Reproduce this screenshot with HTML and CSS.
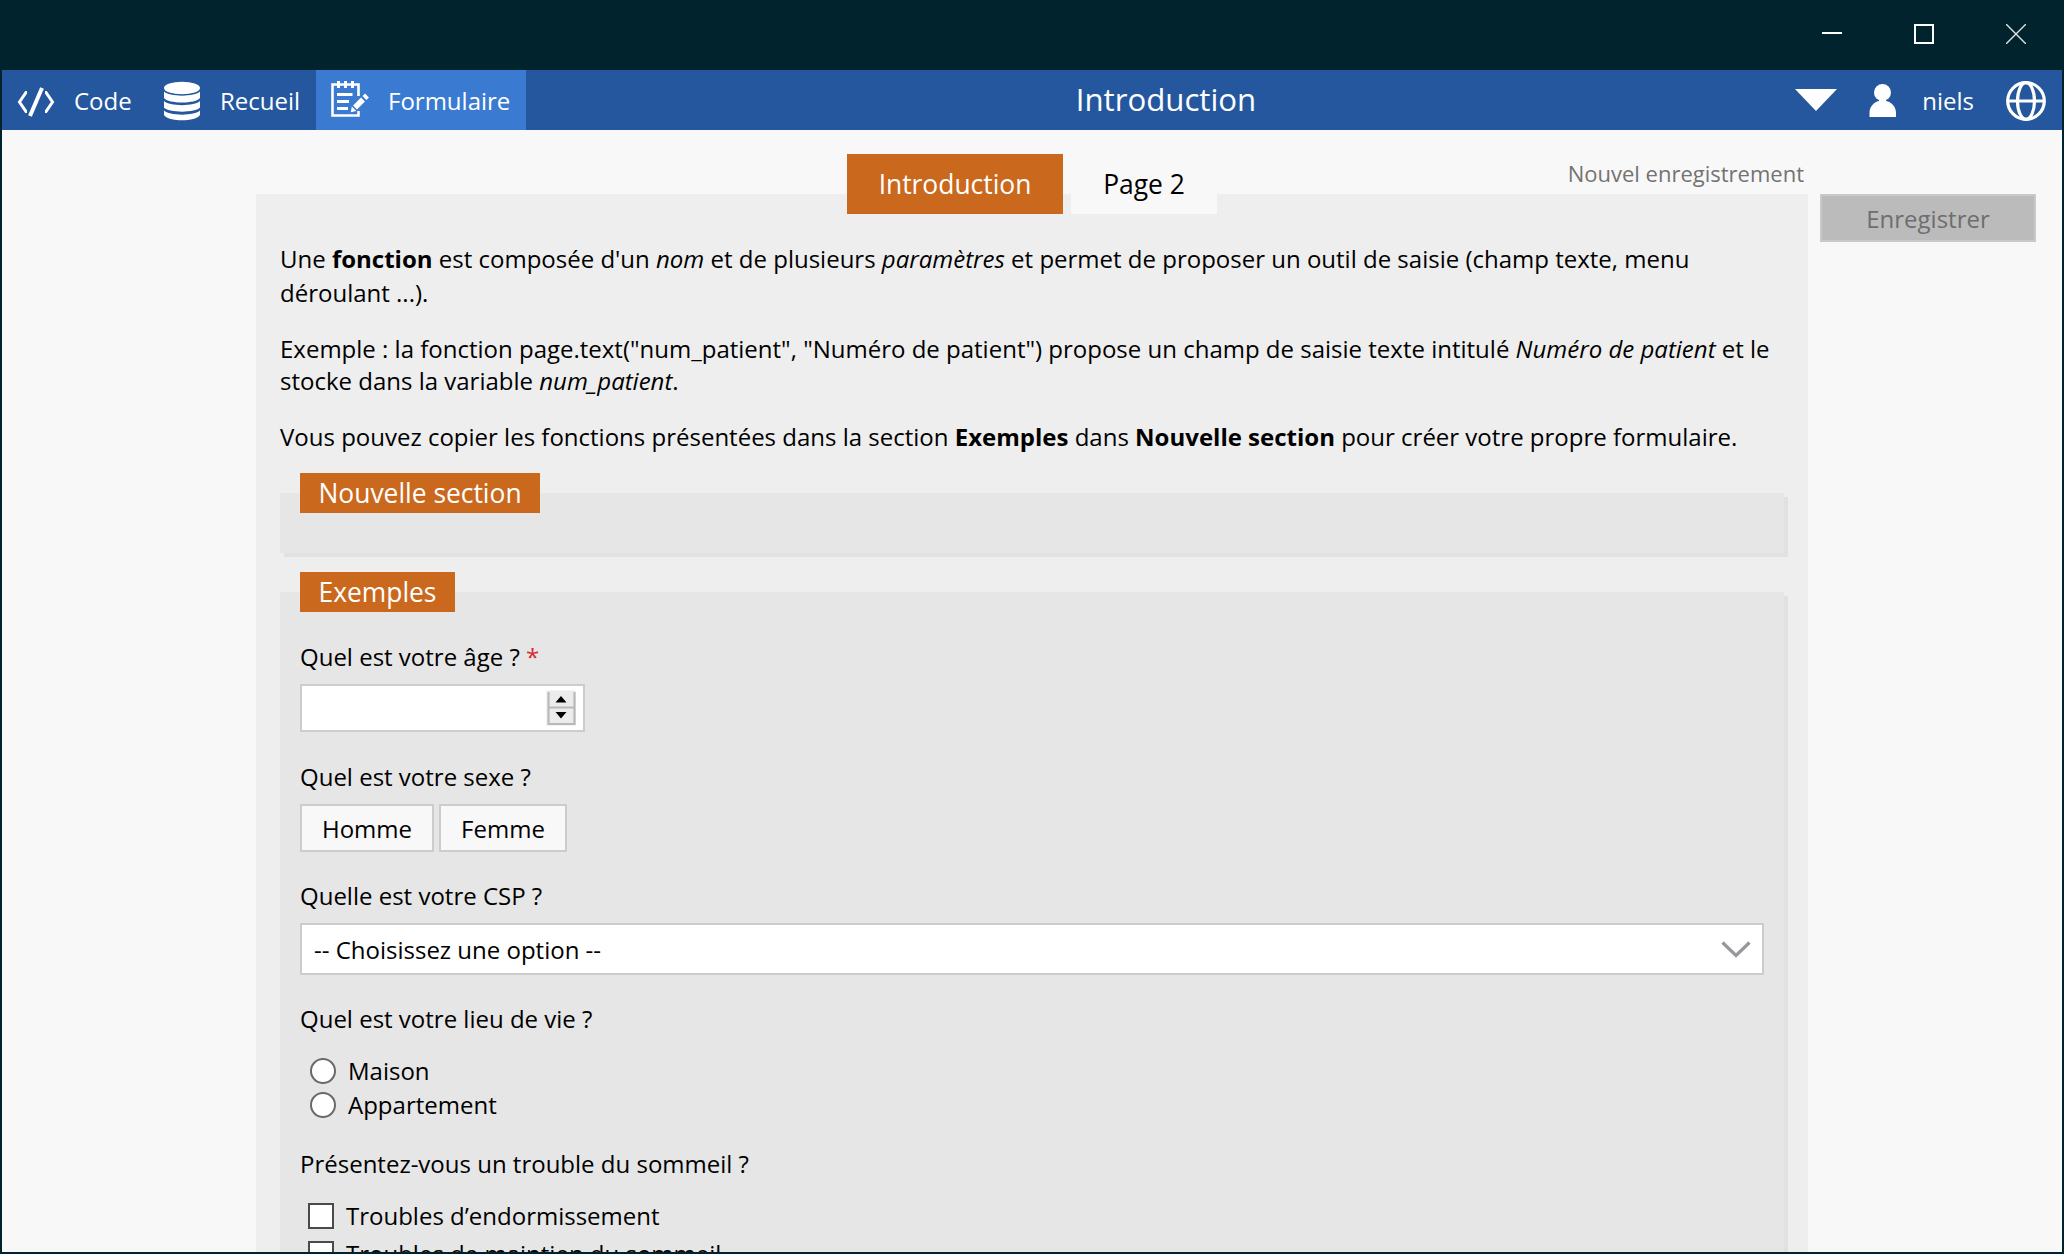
FILE: index.html
```html
<!DOCTYPE html>
<html lang="fr">
<head>
<meta charset="utf-8">
<title>Introduction</title>
<link rel="stylesheet" href="styles.css">
</head>
<body>
<div class="window">
  <header class="titlebar">
    <svg class="win-icon" viewBox="0 0 20 20"><path d="M0 9h20" stroke="#fff" stroke-width="2"/></svg>
    <svg class="win-icon" viewBox="0 0 20 20"><rect x="1" y="1" width="18" height="18" fill="none" stroke="#fff" stroke-width="2"/></svg>
    <svg class="win-icon" viewBox="0 0 20 20"><path d="M0 0L20 20M20 0L0 20" stroke="#e2e4e4" stroke-width="1.4"/></svg>
  </header>

  <nav class="menu">
    <a class="menu-item item-code">
      <svg width="38" height="30" viewBox="0 0 38 30" fill="none" stroke="#fff" stroke-width="3"><path d="M10 5.500h-1L2.500 15L9 24.500h1M28 5.500h1L35.500 15L29 24.500h-1"/><path d="M25 1L13 29" stroke-width="4"/></svg>
      <span>Code</span>
    </a>
    <a class="menu-item item-data">
      <svg width="36" height="40" viewBox="0 0 36 40" fill="#fff"><ellipse cx="18" cy="7" rx="18" ry="6.200"/><path d="M0 10.500C5 16 31 16 36 10.500V17C32 23 4 23 0 17z"/><path d="M0 20C5 25.500 31 25.500 36 20V26.500C32 32 4 32 0 26.500z"/><path d="M0 29.500C5 35 31 35 36 29.500V34C32 41 4 41 0 34z"/></svg>
      <span>Recueil</span>
    </a>
    <a class="menu-item item-form active">
      <svg width="40" height="38" viewBox="0 0 40 38" fill="none" stroke="#fff"><path d="M28.500 16V4.500H2.500V35.500H28.500V31" stroke-width="2.600"/><path d="M8.500 1V8M15.500 1V8M22.500 1V8" stroke-width="3"/><path d="M7 14.500H22.500M7 21.500H19M7 28.500H18" stroke-width="2.800"/><path d="M25 27.500L33 19.500" stroke-width="5.500"/><path d="M34.500 18L37 15.500" stroke-width="5.500"/><path d="M21.800 26.500l4.500 4.500l-5.500 1.200z" fill="#fff" stroke="none"/></svg>
      <span>Formulaire</span>
    </a>
    <span class="menu-title">Introduction</span>
    <svg class="caret" width="42" height="22" viewBox="0 0 42 22" fill="#fff"><path d="M0 0H42L21 22z"/></svg>
    <svg class="user" width="28" height="33" viewBox="0 0 28 33" fill="#fff"><circle cx="13.500" cy="8.500" r="8.500"/><path d="M10 14h7v3c6 1 10 6 10 12v4H.500v-4c0-6 4-11 9.500-12z"/></svg>
    <span class="user-name">niels</span>
    <svg class="globe" width="40" height="40" viewBox="0 0 40 40" fill="none" stroke="#fff" stroke-width="3.200"><circle cx="20" cy="20" r="18.300"/><ellipse cx="20" cy="20" rx="8.500" ry="18.300"/><path d="M2 20H38"/></svg>
  </nav>

  <main class="content">
    <div class="column">
      <div class="tabs">
        <a class="tab selected">Introduction</a>
        <a class="tab">Page 2</a>
        <span class="status">Nouvel enregistrement</span>
      </div>
      <div class="panel">
        <p>Une <b>fonction</b> est composée d'un <i>nom</i> et de plusieurs <i>paramètres</i> et permet de proposer un outil de saisie (champ texte, menu<br>déroulant ...).</p>
        <p class="tight">Exemple : la fonction page.text("num_patient", "Numéro de patient") propose un champ de saisie texte intitulé <i>Numéro de patient</i> et le<br>stocke dans la variable <i>num_patient</i>.</p>
        <p>Vous pouvez copier les fonctions présentées dans la section <b>Exemples</b> dans <b>Nouvelle section</b> pour créer votre propre formulaire.</p>

        <section class="group empty"><h2>Nouvelle section</h2></section>

        <section class="group">
          <h2>Exemples</h2>
          <div class="field age">
            <label>Quel est votre âge ? <span class="required">*</span></label>
            <div class="number">
              <svg width="30" height="36" viewBox="0 0 30 36"><rect width="30" height="36" fill="#f3f3f3"/><rect x="2" y="1" width="26" height="33" fill="#ececec"/><path d="M2.500 2V34H28.500V2M2.500 17.500H28.500" fill="none" stroke="#b9b9b9" stroke-width="2.200"/><path d="M9.500 12.500L15 6l5.500 6.500zM9.500 22h11L15 28.500z" fill="#000"/></svg>
            </div>
          </div>
          <div class="field sex">
            <label>Quel est votre sexe ?</label>
            <div class="choices"><button class="homme">Homme</button><button class="femme">Femme</button></div>
          </div>
          <div class="field csp">
            <label>Quelle est votre CSP ?</label>
            <div class="select"><span>-- Choisissez une option --</span>
              <svg width="30" height="18" viewBox="0 0 30 18"><path d="M1.500 1.500L15 14.500L28.500 1.500" fill="none" stroke="#99979b" stroke-width="3.200"/></svg>
            </div>
          </div>
          <div class="field home">
            <label>Quel est votre lieu de vie ?</label>
            <div class="option"><span class="radio"></span>Maison</div>
            <div class="option"><span class="radio"></span>Appartement</div>
          </div>
          <div class="field sleep">
            <label>Présentez-vous un trouble du sommeil ?</label>
            <div class="option check"><span class="box"></span>Troubles d’endormissement</div>
            <div class="option check"><span class="box"></span>Troubles de maintien du sommeil</div>
          </div>
        </section>
      </div>
    </div>
    <aside class="actions"><button class="save" disabled>Enregistrer</button></aside>
  </main>
</div>
</body>
</html>
```
FILE: styles.css
```css
* { box-sizing: border-box; }
body { margin: 0; background: #00232d; font: 24px/34px "Open Sans", sans-serif; color: #000; }
svg { display: block; flex: none; }
button { font: inherit; color: inherit; margin: 0; padding: 0; border-radius: 0; }
.window { display: flex; flex-direction: column; width: 2064px; height: 1254px; padding: 0 2px 2px; overflow: hidden; white-space: nowrap; }

.titlebar { display: flex; justify-content: flex-end; gap: 72px; flex: none; height: 70px; padding: 24px 36px 0 0; }
.win-icon { width: 20px; height: 20px; }

.menu { display: flex; align-items: center; flex: none; height: 60px; background: #24579e; color: #fff; line-height: 60px; }
.menu-item { display: flex; align-items: center; height: 60px; }
.menu-item span { padding-top: 1px; height: 60px; }
.item-code { width: 146px; padding: 4px 0 0 15px; gap: 19px; }
.item-code span { height: 64px; }
.item-data { width: 168px; padding-left: 16px; gap: 20px; }
.item-data svg { margin-top: 1px; }
.item-form { width: 210px; padding-left: 14px; gap: 18px; }
.item-form svg { margin-top: -2px; }
.active { background: #3a7ad1; }
.menu-title { height: 60px; width: 1180px; margin-left: 50px; text-align: center; font-size: 31.200px; line-height: 59px; }
.caret { margin: 0 32px 0 auto; }
.user { margin-right: 25px; }
.user-name { padding-top: 2px; margin-right: 32px; }
.globe { margin-right: 16px; margin-top: 2px; }

.content { display: flex; flex: 1; min-height: 0; padding: 24px 0 0 254px; background: #f8f8f8; overflow: hidden; }
.column { width: 1552px; flex: none; }
.tabs { position: relative; display: flex; justify-content: center; gap: 8px; height: 60px; margin-bottom: -20px; }
.tab { width: 146px; background: #f8f8f8; text-align: center; font-size: 26.400px; line-height: 61px; }
.tab.selected { width: 216px; background: #ca691e; color: #fff; }
.status { position: absolute; right: 4px; top: 2px; color: #737373; font-size: 22px; }
.panel { height: 1080px; padding: 48px 20px 0 24px; background: #eee; }
p { margin: 0 0 23px; }
p.tight { line-height: 32px; }

.group { width: 1504px; height: 900px; margin-top: 39px; padding: 0 20px; background: #e6e6e6; box-shadow: 4px 4px #e1e1e1; }
.group h2 { position: relative; top: -20px; width: max-content; height: 40px; margin: 0 0 -20px; padding: 0 18.500px; background: #ca691e; color: #fff; font-size: 26.400px; font-weight: 400; line-height: 40px; }
.group.empty { height: 60px; }
.field { display: flex; flex-direction: column; align-items: flex-start; }
.age { padding-top: 28px; }
.required { color: #d9292f; }
.number { width: 285px; height: 48px; margin-top: 10px; padding: 4px 7px; display: flex; justify-content: flex-end; background: #fff; border: 2px solid #ccc; }
.sex { padding-top: 28px; }
.choices { display: flex; gap: 5px; margin-top: 10px; }
.choices button { height: 48px; border: 2px solid #ccc; background: #f8f8f8; padding-top: 1px; line-height: 43px; }
.homme { width: 134px; }
.femme { width: 128px; }
.csp { padding-top: 27px; }
.select { display: flex; justify-content: space-between; width: 1464px; height: 52px; margin-top: 10px; padding: 0 11px 0 12px; background: #fff; border: 2px solid #ccc; line-height: 50px; }
.select svg { margin-top: 16px; }
.home { padding-top: 27px; }
.option { display: flex; align-items: center; gap: 12px; padding-left: 10px; }
.home label { margin-bottom: 18px; }
.radio { width: 26px; height: 26px; border: 2px solid #6b6869; border-radius: 50%; background: #fff; }
.sleep { padding-top: 25px; }
.sleep label { margin-bottom: 16px; }
.check { padding-left: 8px; height: 38px; }
.box { width: 26px; height: 26px; border: 2px solid #4c494b; background: #fff; }

.actions { margin: 40px 0 0 12px; }
.save { width: 216px; height: 48px; padding-top: 1px; background: #bbb; border: 2px solid #c9c9c9; color: #6e6e6e; line-height: 43px; }
```
